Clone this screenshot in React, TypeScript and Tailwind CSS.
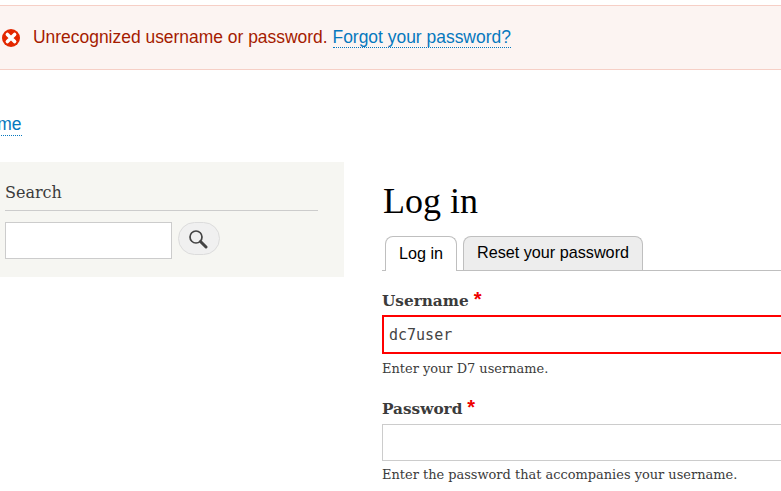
import { useState } from 'react'

// Drupal login page, cropped like the screenshot

function ErrorIcon() {
  return (
    <svg width="18" height="18" viewBox="0 0 18 18" className="shrink-0">
      <circle cx="9" cy="9" r="9" fill="#e32700" />
      <path d="M5.4 5.4 12.6 12.6M12.6 5.4 5.4 12.6" stroke="#fff" strokeWidth="3.6" strokeLinecap="round" />
    </svg>
  )
}

function SearchIcon() {
  return (
    <svg width="20" height="20" viewBox="0 0 20 20" fill="none">
      <circle cx="8" cy="8" r="6" stroke="#444" strokeWidth="1.7" />
      <path d="M12.5 12.5 18 18" stroke="#444" strokeWidth="3" strokeLinecap="round" />
    </svg>
  )
}

function Field(props: { label: string; help: string; value?: string; error?: boolean }) {
  const [value, setValue] = useState(props.value ?? '')
  return (
    <div>
      <label className="flex items-start gap-[5px] h-[20px] font-['DejaVu_Serif',serif] font-bold text-[15.3px] leading-[20px] text-[#3b3b3b]">
        {props.label}
        <span className="-mt-[2px] font-['Liberation_Sans',sans-serif] text-[#e00] font-bold text-[20px] leading-[20px]">*</span>
      </label>
      <input
        value={value}
        onChange={e => setValue(e.target.value)}
        className={
          props.error
            ? "mt-[4px] block w-[520px] h-[39px] px-[5px] border-2 border-[#f00] bg-white font-['DejaVu_Sans_Mono',monospace] text-[15px] text-[#444] outline-none"
            : "mt-[5px] block w-[520px] h-[37px] px-[5px] border border-[#ccc] bg-white font-['DejaVu_Sans_Mono',monospace] text-[15px] text-[#444] outline-none"
        }
      />
      <p className={props.error
        ? "mt-[5px] font-['DejaVu_Serif',serif] text-[12.95px] leading-[20px] text-[#3b3b3b]"
        : "mt-[4px] font-['DejaVu_Serif',serif] text-[12.95px] leading-[20px] text-[#3b3b3b]"}>{props.help}</p>
    </div>
  )
}

export default function App() {
  return (
    <div className="w-[781px] h-[491px] overflow-hidden bg-white pt-[5px] font-['Liberation_Sans',sans-serif]">
      <div className="h-[65px] flex items-center gap-[13px] pl-[2px] bg-[#fcf4f2] border-y border-[#f6cfc6] text-[17.45px]">
        <ErrorIcon />
        <p className="-mt-px text-[#a51b00]">
          Unrecognized username or password.{' '}
          <a href="#" className="text-[#0678be] border-b border-dotted border-[#0678be]">Forgot your password?</a>
        </p>
      </div>

      <div className="mt-[44px] h-[21px] text-[17.45px] leading-[21px]">
        <a href="#" className="-ml-[25px] inline-block text-[#0678be] border-b border-dotted border-[#0678be]">Home</a>
      </div>

      <div className="mt-[27px] flex items-start">
        <aside className="w-[344px] h-[115px] shrink-0 pl-[5px] pt-[20px] bg-[#f6f6f2]">
          <h2 className="w-[313px] h-[29px] border-b border-[#ccc] font-['DejaVu_Serif',serif] text-[16px] leading-[22px] text-[#3b3b3b]">Search</h2>
          <div className="mt-[11px] flex items-start gap-[6px]">
            <input className="w-[167px] h-[37px] border border-[#ccc] bg-white outline-none" />
            <button className="w-[42px] h-[33px] flex items-center justify-center pr-[3px] rounded-[17px] border border-[#dcdcdc] bg-[#f0f0f0]">
              <SearchIcon />
            </button>
          </div>
        </aside>

        <main className="ml-[38px] w-[520px] shrink-0">
          <h1 className="mt-[17px] ml-[1px] font-['Liberation_Serif',serif] text-[36px] leading-[44px] text-black">Log in</h1>
          <div className="mt-[13px] h-[35px] flex items-end gap-[6px] pl-[3px] border-b border-[#bfbfbf] text-[16.2px]">
            <a href="#" className="-mb-px h-[35px] w-[72px] flex items-center justify-center pb-[2px] rounded-t-[8px] border border-b-0 border-[#bfbfbf] bg-white text-black">Log in</a>
            <a href="#" className="h-[34px] w-[180px] flex items-center justify-center pb-[2px] rounded-t-[8px] border border-b-0 border-[#bfbfbf] bg-[#ededed] text-black">Reset your password</a>
          </div>
          <div className="mt-[20px] flex flex-col gap-[20px]">
            <Field label="Username" value="dc7user" error help="Enter your D7 username." />
            <Field label="Password" help="Enter the password that accompanies your username." />
          </div>
        </main>
      </div>
    </div>
  )
}
